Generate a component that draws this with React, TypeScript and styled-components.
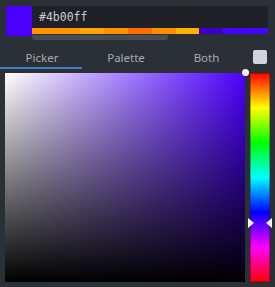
import React from "react";
import styled, { createGlobalStyle } from "styled-components";

const Global = createGlobalStyle`
  html, body { margin: 0; padding: 0; background: #2b2f36; }
  body { width: 275px; height: 287px; overflow: hidden; font-family: "Noto Sans", sans-serif; }
`;

const Panel = styled.div`
  width: 275px;
  height: 287px;
  background: #2b2f36;
  display: flex;
  flex-direction: column;
`;

const Header = styled.div`
  display: flex;
  padding: 6px 7px 0 6px;
  height: 35px;
`;

const Swatch = styled.div<{ $color: string }>`
  width: 26px;
  height: 30px;
  background: ${(p) => p.$color};
`;

const FieldColumn = styled.div`
  flex: 1;
  display: flex;
  flex-direction: column;
`;

const HexField = styled.div`
  height: 22px;
  background: #1f2126;
  color: #c9ccd2;
  font-family: "DejaVu Sans Mono", monospace;
  font-size: 11.5px;
  line-height: 22px;
  padding-left: 7px;
`;

const HistoryBar = styled.div`
  display: flex;
  height: 6px;
`;

const HistoryCell = styled.div<{ $color: string; $w: number }>`
  width: ${(p) => p.$w}px;
  background: ${(p) => p.$color};
`;

const ScrollThumb = styled.div`
  margin-top: 1px;
  width: 136px;
  height: 5px;
  border-radius: 0 0 3px 3px;
  background: #464b54;
`;

const TabsRow = styled.div`
  display: flex;
  align-items: center;
  margin-top: 4px;
  height: 24px;
`;

const Tab = styled.div<{ $w: number; $active?: boolean }>`
  position: relative;
  box-sizing: border-box;
  width: ${(p) => p.$w}px;
  height: 24px;
  padding-top: 3px;
  line-height: 20px;
  text-align: center;
  font-size: 11.5px;
  color: #a6abb3;
  &::after {
    content: "";
    display: ${(p) => (p.$active ? "block" : "none")};
    position: absolute;
    left: 0;
    bottom: 0;
    width: 82px;
    height: 2px;
    background: #3e80c8;
  }
`;

const Check = styled.div`
  width: 14px;
  height: 14px;
  margin-left: 8px;
  border-radius: 2px;
  background: #d3d5db;
`;

const PickerRow = styled.div`
  display: flex;
  gap: 5px;
  padding: 4px 5px 0 5px;
`;

const SVArea = styled.div<{ $hue: number }>`
  position: relative;
  width: 240px;
  height: 209px;
  background:
    linear-gradient(to bottom, rgba(0,0,0,0), #000),
    linear-gradient(to right, #fff, hsl(${(p) => p.$hue}, 100%, 50%));
`;

const Knob = styled.div`
  position: absolute;
  right: -4px;
  top: -4px;
  width: 7px;
  height: 7px;
  border-radius: 50%;
  background: #f4f4f6;
`;

const HueBar = styled.div`
  position: relative;
  width: 20px;
  height: 209px;
  box-sizing: border-box;
  box-shadow: inset 0 0 0 1px rgba(60, 0, 0, 0.35);
  background: linear-gradient(
    to bottom,
    #ff0000 0%,
    #ffff00 16.67%,
    #00ff00 33.33%,
    #00ffff 50%,
    #0000ff 66.67%,
    #ff00ff 83.33%,
    #ff0000 100%
  );
`;

const Arrow = styled.div<{ $side: "left" | "right" }>`
  position: absolute;
  top: var(--y);
  width: 0;
  height: 0;
  border-top: 5px solid transparent;
  border-bottom: 5px solid transparent;
  ${(p) =>
    p.$side === "left"
      ? `left: -2px; border-left: 6px solid #f2f2f4;`
      : `right: -2px; border-right: 6px solid #f2f2f4;`}
  transform: translateY(-5px);
`;

const history = [
  { c: "#ff9400", w: 48 },
  { c: "#ffa40a", w: 24 },
  { c: "#ff9000", w: 24 },
  { c: "#ff6c00", w: 24 },
  { c: "#ff8e00", w: 24 },
  { c: "#ffb000", w: 23 },
  { c: "#3b00c8", w: 24 },
  { c: "#4407f5", w: 45 },
];

export default function App() {
  const hue = 258;
  const y = (hue / 360) * 209;
  return (
    <>
      <Global />
      <Panel>
        <Header>
          <Swatch $color="#4b00ff" />
          <FieldColumn>
            <HexField>#4b00ff</HexField>
            <HistoryBar>
              {history.map((h, i) => (
                <HistoryCell key={i} $color={h.c} $w={h.w} />
              ))}
            </HistoryBar>
            <ScrollThumb />
          </FieldColumn>
        </Header>
        <TabsRow>
          <Tab $w={84} $active>Picker</Tab>
          <Tab $w={84}>Palette</Tab>
          <Tab $w={77}>Both</Tab>
          <Check />
        </TabsRow>
        <PickerRow>
          <SVArea $hue={hue}>
            <Knob />
          </SVArea>
          <HueBar style={{ ["--y" as any]: `${y}px` }}>
            <Arrow $side="left" />
            <Arrow $side="right" />
          </HueBar>
        </PickerRow>
      </Panel>
    </>
  );
}
